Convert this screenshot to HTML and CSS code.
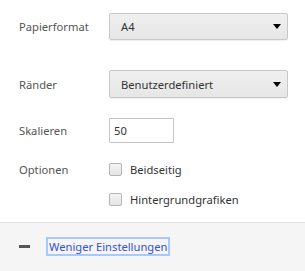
FILE: index.html
```html
<!DOCTYPE html>
<html lang="de">
<head>
    <meta charset="UTF-8">
    <title>Drucken - Einstellungen</title>
    <link rel="stylesheet" href="styles.css">
</head>
<body>
    <div class="settings">
        <div class="row row-select">
            <span class="label">Papierformat</span>
            <div class="select">
                <span>A4</span>
                <svg class="arrow" width="8" height="5" viewBox="0 0 8 5"><path d="M0 0h8L4 5z" fill="#000"/></svg>
            </div>
        </div>

        <div class="row row-select second">
            <span class="label">Ränder</span>
            <div class="select">
                <span>Benutzerdefiniert</span>
                <svg class="arrow" width="8" height="5" viewBox="0 0 8 5"><path d="M0 0h8L4 5z" fill="#000"/></svg>
            </div>
        </div>

        <div class="row row-input">
            <span class="label">Skalieren</span>
            <input class="scale" type="text" value="50">
        </div>

        <div class="row row-check">
            <span class="label">Optionen</span>
            <label class="check"><span class="box"></span>Beidseitig</label>
        </div>

        <div class="row row-check next">
            <span class="label"></span>
            <label class="check"><span class="box"></span>Hintergrundgrafiken</label>
        </div>
    </div>

    <!-- Footer -->
    <div class="footer">
        <span class="dash"></span>
        <a class="less-link" href="#">Weniger Einstellungen</a>
    </div>
</body>
</html>
```

FILE: styles.css
```css
* {
    margin: 0;
    padding: 0;
    box-sizing: border-box;
}

body {
    font-family: "Noto Sans", "Open Sans", sans-serif;
    font-size: 11.2px;
    color: #444;
    background: #fff;
}

.settings {
    padding: 13px 17px 16px 19px;
    border-bottom: 1px solid #e0e0e0;
}

.row {
    display: flex;
    align-items: center;
}

.label {
    width: 90px;
    flex-shrink: 0;
    color: #555;
}

/* Select boxes */
.select {
    display: flex;
    align-items: center;
    justify-content: space-between;
    width: 179px;
    height: 27px;
    padding: 0 6px 0 11px;
    border: 1px solid #c8c8c8;
    border-radius: 2px;
    background: linear-gradient(#f0f0f0, #e6e6e6);
    box-shadow: 0 1px 0 rgba(0, 0, 0, 0.06);
    color: #333;
}

.second {
    margin-top: 30px;
}

.second .select {
    height: 28px;
}

/* Scale input */
.row-input {
    margin-top: 20px;
}

.scale {
    width: 65px;
    height: 25px;
    padding: 0 4px;
    border: 1px solid #c4c4c4;
    border-radius: 1px;
    font: inherit;
    color: #333;
}

/* Checkboxes */
.row-check {
    margin-top: 20px;
    height: 13px;
}

.row-check.next {
    margin-top: 17px;
}

.check {
    display: flex;
    align-items: center;
    color: #333;
}

.box {
    width: 13px;
    height: 13px;
    margin-right: 8px;
    border: 1px solid #b4b4b4;
    border-radius: 2px;
    background: linear-gradient(#f4f4f4, #e4e4e4);
}

/* Footer */
.footer {
    display: flex;
    align-items: center;
    height: 49px;
    padding: 0 0 3px 19px;
    background: #f5f5f5;
}

.dash {
    width: 11px;
    height: 3px;
    margin-right: 18px;
    background: #555;
}

.less-link {
    color: #3352d6;
    text-decoration: none;
    outline: 2px solid #a9c8fb;
    outline-offset: 0;
    padding: 0 1px;
    line-height: 15px;
}
```
